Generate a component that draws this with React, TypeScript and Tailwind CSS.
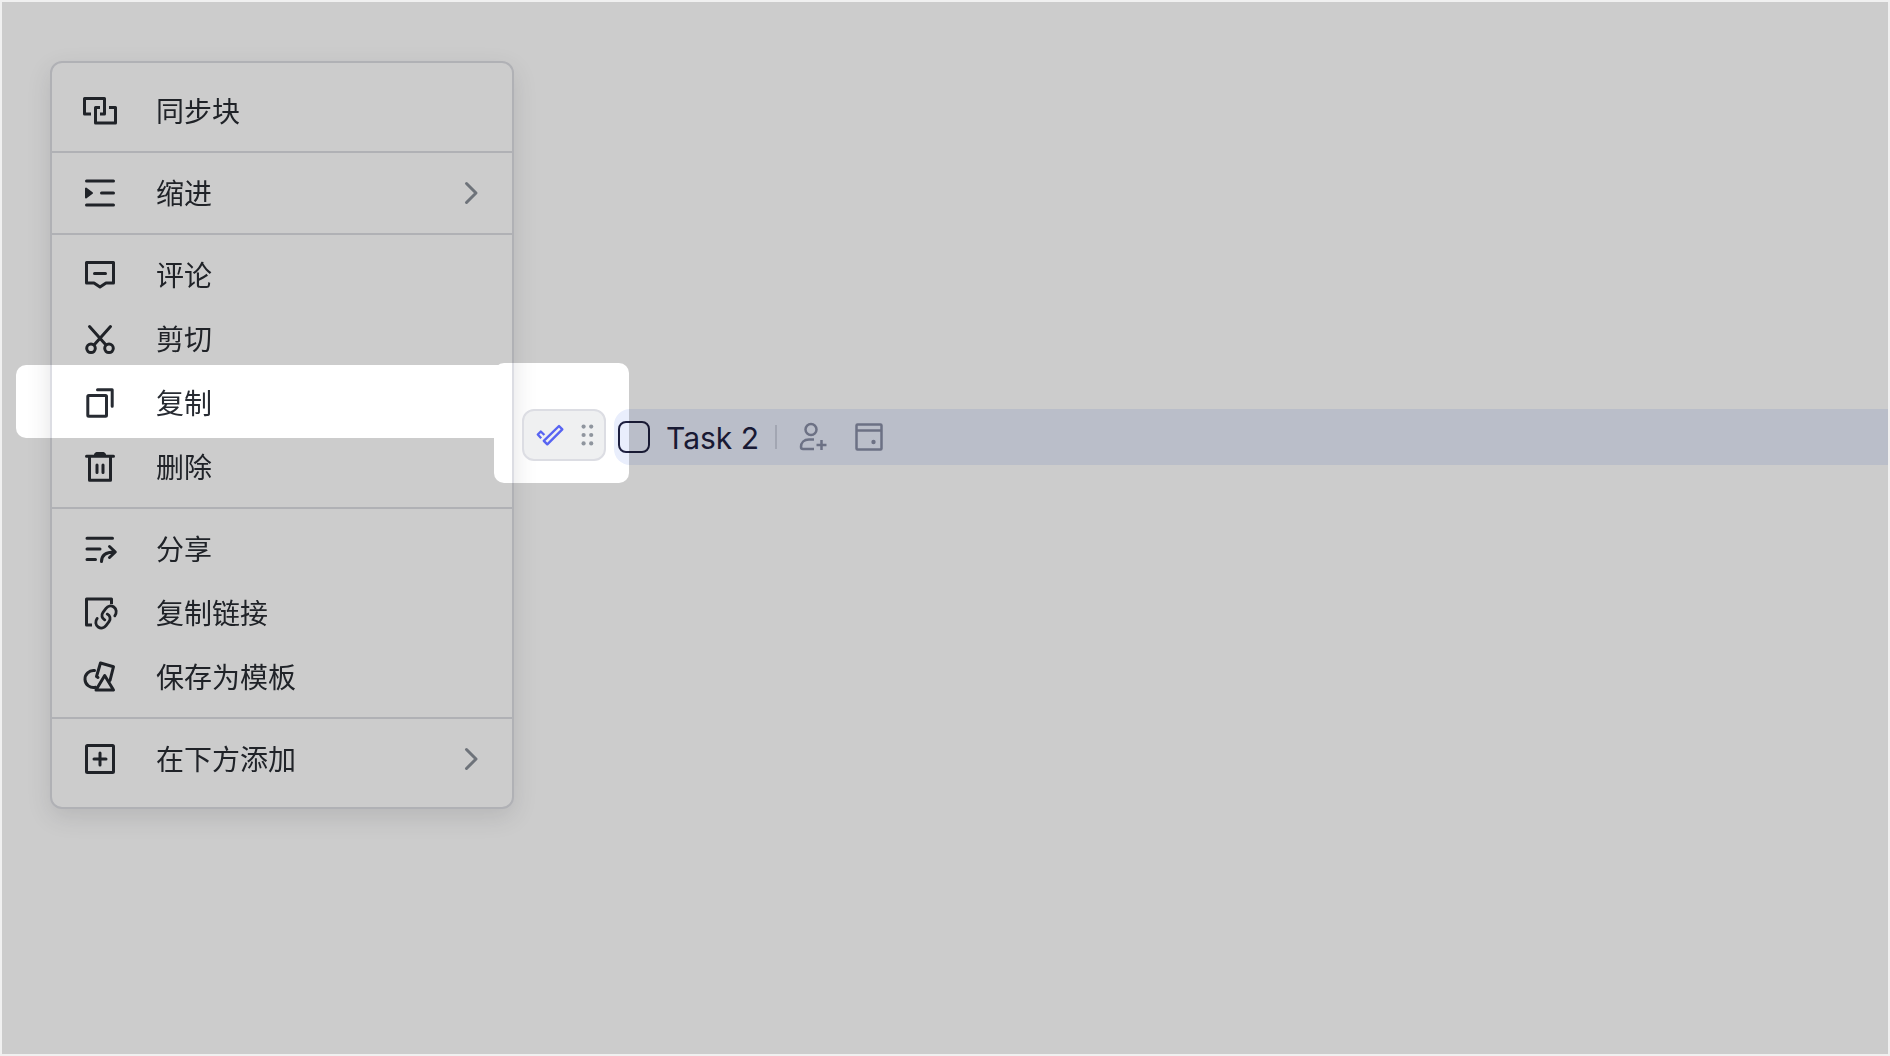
import React from "react";
import clsx from "clsx";

type IconProps = { children: React.ReactNode };

const Icon = ({ children }: IconProps) => (
  <svg
    viewBox="0 0 40 40"
    className="size-10 shrink-0"
    fill="none"
    stroke="currentColor"
    strokeWidth="3"
    strokeLinecap="round"
    strokeLinejoin="round"
    aria-hidden="true"
  >
    {children}
  </svg>
);

const icons = {
  sync: (
    <Icon>
      <path strokeLinecap="butt" d="M11 23H4.5V7.5h20V23H20" />
      <path strokeLinecap="butt" d="M20 16.5h-4.5V32h20V16.5H29" />
    </Icon>
  ),
  indent: (
    <Icon>
      <path d="M6.5 8h27M21.5 20h12M6.5 32h27" />
      <path d="M6 15.5v9l6-4.5z" fill="currentColor" strokeWidth="2" />
    </Icon>
  ),
  comment: (
    <Icon>
      <path d="M6.5 7.5h27V28H26l-6 4-6-4H6.5z" />
      <path d="M14.5 18.5h11" />
    </Icon>
  ),
  cut: (
    <Icon>
      <path d="M9.5 7.5L26 26M30.5 7.5L14 26" />
      <circle cx="11" cy="29.3" r="4.3" />
      <circle cx="29" cy="29.3" r="4.3" />
    </Icon>
  ),
  copy: (
    <Icon>
      <rect x="7.8" y="12.5" width="18.7" height="20.7" rx="1" />
      <path d="M17.5 6.8h14.7v16.5" />
    </Icon>
  ),
  trash: (
    <Icon>
      <path d="M6.5 9.3h27M9.5 9.3v24h21v-24" />
      <path d="M15.5 7.5l1-1h7l1 1z" fill="currentColor" />
      <path d="M17 18v7.5M23 18v7.5" />
    </Icon>
  ),
  share: (
    <Icon>
      <path d="M7 9.3h25.5M7 20h13M7 30.5h8.5" />
      <path d="M21.5 32.5c0-6 4-9.5 13-9.5M29.5 17.5l5.8 5.5-5.8 5.5" />
    </Icon>
  ),
  link: (
    <Icon>
      <path strokeLinecap="butt" d="M12 32H6.5V6h25v5" />
      <path
        strokeWidth="2.8"
        d="M34.8 22.8c2.2-3 1.8-6.8-1-8.8s-6-1-7.8 1.3l-3 4c-2 3-1.2 6 1.8 7.6"
      />
      <path
        strokeWidth="2.8"
        d="M17.2 25.4c-2.2 3-1.8 6.6 1 8.6s6 1 7.8-1.3l3-4c2-3 1.2-6-1.8-7.6"
      />
    </Icon>
  ),
  template: (
    <Icon>
      <path d="M14.5 13.6a8.5 8.5 0 1 0 1 16.7" />
      <path d="M18 20.5l-1.5-1 4-13.5 13 3.7L30 23.5" />
      <path d="M24.7 18.5L33.5 33H16z" />
    </Icon>
  ),
  add: (
    <Icon>
      <rect x="6.5" y="6.5" width="27" height="27" rx="1" />
      <path d="M14 20h12M20 14v12" />
    </Icon>
  ),
};

type MenuItem = {
  icon: keyof typeof icons;
  label: string;
  submenu?: boolean;
};

const groups: MenuItem[][] = [
  [{ icon: "sync", label: "同步块" }],
  [{ icon: "indent", label: "缩进", submenu: true }],
  [
    { icon: "comment", label: "评论" },
    { icon: "cut", label: "剪切" },
    { icon: "copy", label: "复制" },
    { icon: "trash", label: "删除" },
  ],
  [
    { icon: "share", label: "分享" },
    { icon: "link", label: "复制链接" },
    { icon: "template", label: "保存为模板" },
  ],
  [{ icon: "add", label: "在下方添加", submenu: true }],
];

const BlockMenu = () => (
  <div
    role="menu"
    className="w-[464px] shrink-0 rounded-xl border-2 border-[#dcdde3] bg-white py-2 shadow-[0_8px_24px_rgba(31,35,41,0.12)]"
  >
    {groups.map((group, index) => (
      <div
        key={group[0].label}
        role="group"
        className={clsx("py-2", index > 0 && "border-t-2 border-[#dcdde3]")}
      >
        {group.map((item) => (
          <button
            key={item.label}
            type="button"
            role="menuitem"
            aria-haspopup={item.submenu ? "menu" : undefined}
            className="flex h-16 w-full cursor-pointer items-center gap-9 px-7 text-left text-[28px] text-[#272b32]"
          >
            {icons[item.icon]}
            <span className="flex-1 pb-0.5">{item.label}</span>
            {item.submenu && (
              <svg
                viewBox="0 0 28 28"
                className="size-7 text-[#8a9099]"
                fill="none"
                stroke="currentColor"
                strokeWidth="3"
                strokeLinecap="round"
                strokeLinejoin="round"
                aria-hidden="true"
              >
                <path d="M10.5 4.5L20 14l-9.500 9.500" />
              </svg>
            )}
          </button>
        ))}
      </div>
    ))}
  </div>
);

const BlockHandle = () => (
  <button
    type="button"
    aria-label="Task block"
    className="flex h-[52px] w-[84px] shrink-0 cursor-pointer items-center justify-between rounded-xl border-2 border-[#dcdde3] bg-[#eff0f1] pl-2.5 pr-2"
  >
    <svg
      viewBox="0 0 32 32"
      className="size-8"
      fill="none"
      stroke="#5864f2"
      strokeWidth="2.4"
      strokeLinejoin="round"
      aria-hidden="true"
    >
      <path d="M25 7l3.300 3.300-15 15-3.500-3.500z" />
      <path d="M7.200 19.200l-3.400-3.700 3-3 3.600 3.500" />
    </svg>
    <svg viewBox="0 0 20 32" className="h-8 w-5" fill="#8f959e" aria-hidden="true">
      {[7.6, 16, 24.4].map((y) => (
        <React.Fragment key={y}>
          <circle cx="7.6" cy={y} r="2.1" />
          <circle cx="15.2" cy={y} r="2.1" />
        </React.Fragment>
      ))}
    </svg>
  </button>
);

const TaskRow = () => (
  <div className="flex h-14 flex-1 items-center rounded-l-2xl bg-[#e9eefc] pl-1">
    <label className="flex items-center gap-4 font-[Inter,sans-serif] text-[30px] leading-10 text-[#1e2040]">
      <input
        type="checkbox"
        className="size-8 appearance-none rounded-lg border-2 border-[#1e2040]"
      />
      <span className="pt-0.5">Task 2</span>
    </label>
    <span className="ml-4 h-6 w-0.5 bg-[#cbd0df]" />
    <button type="button" aria-label="Assign" className="ml-5 cursor-pointer text-[#878da5]">
      <svg
        viewBox="0 0 32 32"
        className="size-8"
        fill="none"
        stroke="currentColor"
        strokeWidth="2.5"
        aria-hidden="true"
      >
        <circle cx="14" cy="8.500" r="5.500" />
        <path d="M17 18.500h-5c-5 0-8 3-8 7.500 0 1.200.8 2 2 2h11" />
        <path d="M19.500 24h10M24.500 19v10" />
      </svg>
    </button>
    <button type="button" aria-label="Due date" className="ml-6 cursor-pointer text-[#878da5]">
      <svg
        viewBox="0 0 32 32"
        className="size-8"
        fill="none"
        stroke="currentColor"
        strokeWidth="2.5"
        aria-hidden="true"
      >
        <rect x="3.5" y="3.5" width="25" height="25" rx="1" />
        <path d="M3.500 9.500h25" />
        <circle cx="20.5" cy="21" r="2.2" fill="currentColor" stroke="none" />
      </svg>
    </button>
  </div>
);

export default function App() {
  return (
    <main className="relative isolate min-h-screen border-2 border-[#f0f0f0] bg-[#ccc] font-['Noto_Sans_CJK_SC',sans-serif]">
      {/* lit areas of the dimmed page */}
      <div className="absolute left-3.5 top-[363px] h-[73px] w-[490px] rounded-l-[10px] bg-white" />
      <div className="absolute left-[492px] top-[361px] h-[120px] w-[135px] rounded-[10px] bg-white" />

      <div className="flex items-start gap-2 pl-12 pt-[59px] mix-blend-multiply">
        <BlockMenu />
        <div className="mt-[348px] flex min-w-0 flex-1 items-start gap-2">
          <BlockHandle />
          <TaskRow />
        </div>
      </div>
    </main>
  );
}
